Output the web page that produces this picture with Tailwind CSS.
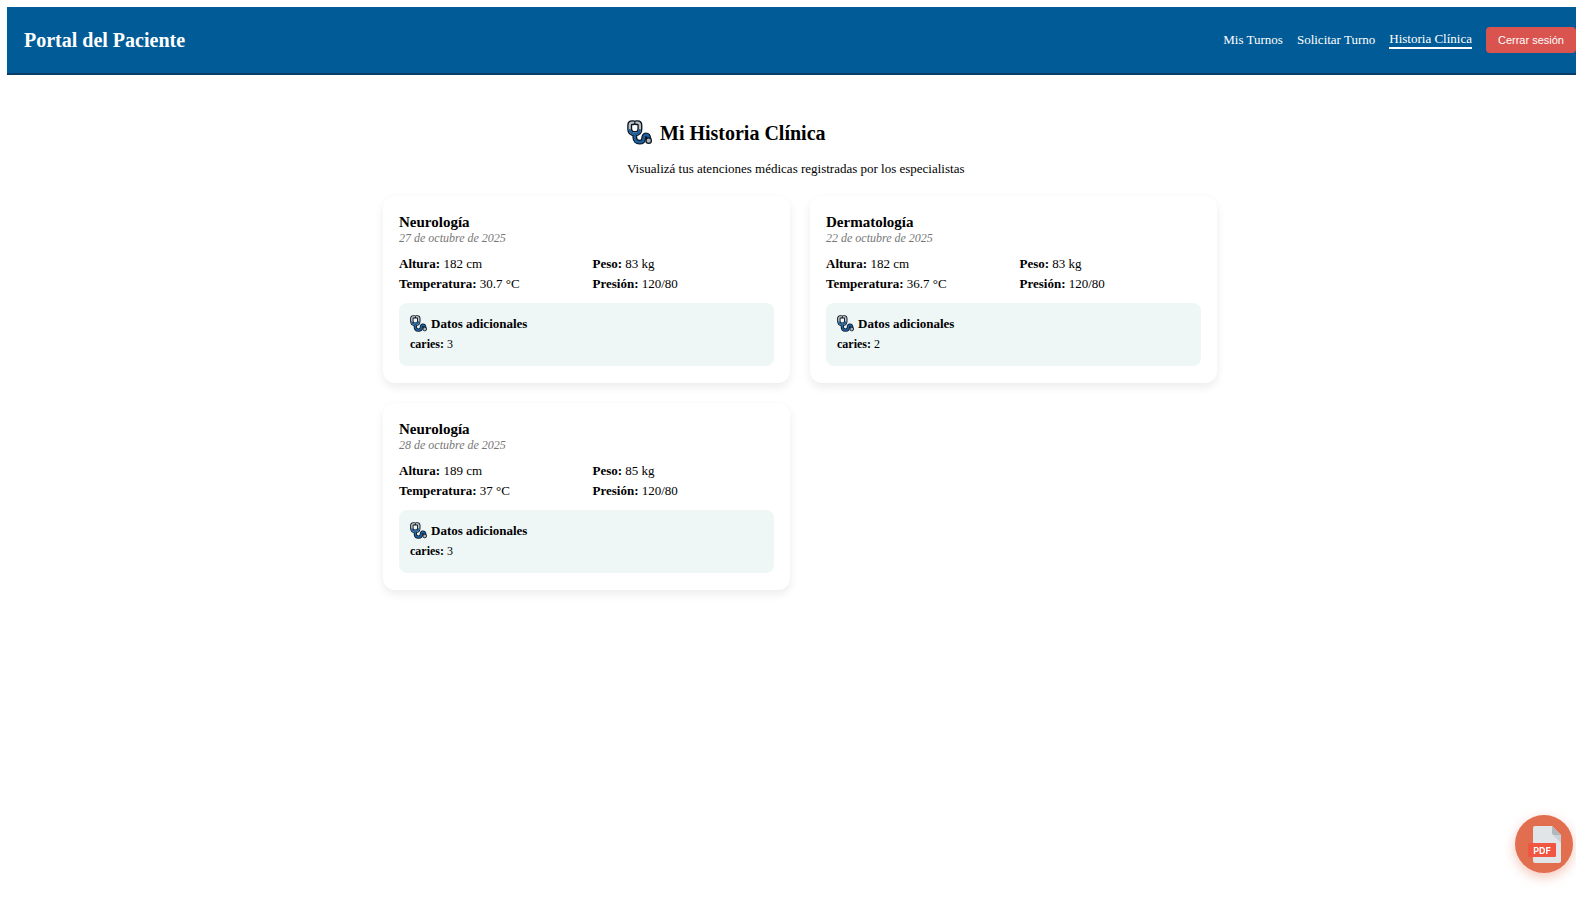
<!DOCTYPE html>
<html lang="es">
<head>
<meta charset="utf-8">
<title>Portal del Paciente</title>
<script src="https://cdn.jsdelivr.net/npm/@tailwindcss/browser@4"></script>
</head>
<body class="min-h-screen overflow-x-hidden bg-white text-black font-['Liberation_Serif',serif]">
<svg class="hidden" aria-hidden="true">
  <symbol id="stethoscope" viewBox="0 0 24 24">
    <g fill="none" stroke-linecap="round" stroke-linejoin="round">
      <path d="M7.500 13v3.500c0 3 1.800 4.800 4.500 4.800s4-1.500 4-3.800c0-2 .8-3.300 2.200-3.300s2.600 1.200 2.800 4" stroke="#0b1420" stroke-width="4.600"/>
      <path d="M6 2.600H5c-1.600 0-2.400.9-2.400 2.500v3.600c0 3 1.900 4.500 4.900 4.500s4.900-1.500 4.900-4.500V5.100c0-1.600-.8-2.500-2.400-2.500H9" stroke="#0b1420" stroke-width="4.800"/>
      <path d="M7.500 13v3.500c0 3 1.800 4.800 4.500 4.800s4-1.500 4-3.800c0-2 .8-3.300 2.200-3.300s2.600 1.200 2.800 4" stroke="#1b5f9e" stroke-width="2.400"/>
      <path d="M6 2.600H5c-1.600 0-2.400.9-2.400 2.500v3.600c0 3 1.900 4.500 4.900 4.500s4.900-1.500 4.900-4.500V5.100c0-1.600-.8-2.500-2.400-2.500H9" stroke="#b9c1c6" stroke-width="2.200"/>
      <path d="M2.700 9.800c.5 2.300 2.200 3.400 4.800 3.400s4.300-1.100 4.800-3.400" stroke="#1b5f9e" stroke-width="2.200"/>
    </g>
    <circle cx="20.800" cy="19.800" r="2.600" fill="#aeb4b8" stroke="#0b1420" stroke-width="1.200"/>
  </symbol>
</svg>

<header class="mt-[7px] ml-[7px] flex h-[68px] items-center justify-between border-b-2 border-[#083d66] bg-[#005b96] pl-[17px] text-white">
  <h1 class="text-[20px] font-bold leading-6">Portal del Paciente</h1>
  <nav class="flex items-center gap-3.5 text-[13px] leading-4">
    <a href="#">Mis Turnos</a>
    <a href="#">Solicitar Turno</a>
    <a href="#" class="border-b-2 border-white" aria-current="page">Historia Clínica</a>
    <button type="button" class="h-[26px] rounded bg-[#d9534f] px-3 font-['Liberation_Sans',sans-serif] text-[11px]">Cerrar sesión</button>
  </nav>
</header>

<main class="pl-6 pt-[45px]">
  <div class="mx-auto max-w-[346px]">
    <h2 class="flex items-center gap-2 text-[20px] font-bold leading-6"><svg class="size-[25px]"><use href="#stethoscope"/></svg>Mi Historia Clínica</h2>
    <p class="mt-4 text-[13px] leading-4">Visualizá tus atenciones médicas registradas por los especialistas</p>
  </div>

  <section class="mx-auto mt-[19px] grid max-w-[834px] grid-cols-2 gap-5">
    <article class="rounded-xl bg-white px-4 pt-[18px] pb-[17px] shadow-[0_4px_10px_rgba(0,0,0,0.08)]">
      <h3 class="text-[15px] font-bold leading-4">Neurología</h3>
      <p class="text-[12px] italic leading-4 text-[#777777]">27 de octubre de 2025</p>
      <div class="mt-2.5 grid grid-cols-2 gap-x-3 gap-y-1 text-[13px] leading-4">
        <p><strong>Altura:</strong> 182 cm</p>
        <p><strong>Peso:</strong> 83 kg</p>
        <p><strong>Temperatura:</strong> 30.7 °C</p>
        <p><strong>Presión:</strong> 120/80</p>
      </div>
      <div class="mt-[11px] h-[63px] rounded-lg bg-[#eef7f6] px-[11px] pt-3">
        <h4 class="flex items-center gap-1 text-[13px] font-bold leading-4"><svg class="size-[17px]"><use href="#stethoscope"/></svg>Datos adicionales</h4>
        <p class="mt-1 text-[12px] leading-4"><strong>caries:</strong> 3</p>
      </div>
    </article>

    <article class="rounded-xl bg-white px-4 pt-[18px] pb-[17px] shadow-[0_4px_10px_rgba(0,0,0,0.08)]">
      <h3 class="text-[15px] font-bold leading-4">Dermatología</h3>
      <p class="text-[12px] italic leading-4 text-[#777777]">22 de octubre de 2025</p>
      <div class="mt-2.5 grid grid-cols-2 gap-x-3 gap-y-1 text-[13px] leading-4">
        <p><strong>Altura:</strong> 182 cm</p>
        <p><strong>Peso:</strong> 83 kg</p>
        <p><strong>Temperatura:</strong> 36.7 °C</p>
        <p><strong>Presión:</strong> 120/80</p>
      </div>
      <div class="mt-[11px] h-[63px] rounded-lg bg-[#eef7f6] px-[11px] pt-3">
        <h4 class="flex items-center gap-1 text-[13px] font-bold leading-4"><svg class="size-[17px]"><use href="#stethoscope"/></svg>Datos adicionales</h4>
        <p class="mt-1 text-[12px] leading-4"><strong>caries:</strong> 2</p>
      </div>
    </article>

    <article class="rounded-xl bg-white px-4 pt-[18px] pb-[17px] shadow-[0_4px_10px_rgba(0,0,0,0.08)]">
      <h3 class="text-[15px] font-bold leading-4">Neurología</h3>
      <p class="text-[12px] italic leading-4 text-[#777777]">28 de octubre de 2025</p>
      <div class="mt-2.5 grid grid-cols-2 gap-x-3 gap-y-1 text-[13px] leading-4">
        <p><strong>Altura:</strong> 189 cm</p>
        <p><strong>Peso:</strong> 85 kg</p>
        <p><strong>Temperatura:</strong> 37 °C</p>
        <p><strong>Presión:</strong> 120/80</p>
      </div>
      <div class="mt-[11px] h-[63px] rounded-lg bg-[#eef7f6] px-[11px] pt-3">
        <h4 class="flex items-center gap-1 text-[13px] font-bold leading-4"><svg class="size-[17px]"><use href="#stethoscope"/></svg>Datos adicionales</h4>
        <p class="mt-1 text-[12px] leading-4"><strong>caries:</strong> 3</p>
      </div>
    </article>
  </section>
</main>

<button type="button" aria-label="Descargar PDF" class="fixed right-[3px] bottom-[27px] grid size-[58px] place-items-center rounded-full bg-[#e26e50] shadow-[0_4px_12px_rgba(226,110,80,0.4)]">
  <svg class="size-[58px]" viewBox="0 0 58 58">
    <path d="M20 11h17l9 9v26a2 2 0 0 1-2 2H20a2 2 0 0 1-2-2V13a2 2 0 0 1 2-2z" fill="#e1e5e8"/>
    <path d="m38 20 8 8v-8z" fill="#cad1d8"/>
    <path d="M37 11l9 9h-7a2 2 0 0 1-2-2z" fill="#b0b7bd"/>
    <rect x="13" y="28" width="28" height="14" rx="1" fill="#f15642"/>
    <text x="27" y="38.500" text-anchor="middle" font-family="Inter, sans-serif" font-size="9" font-weight="700" fill="#ffffff">PDF</text>
  </svg>
</button>
</body>
</html>
